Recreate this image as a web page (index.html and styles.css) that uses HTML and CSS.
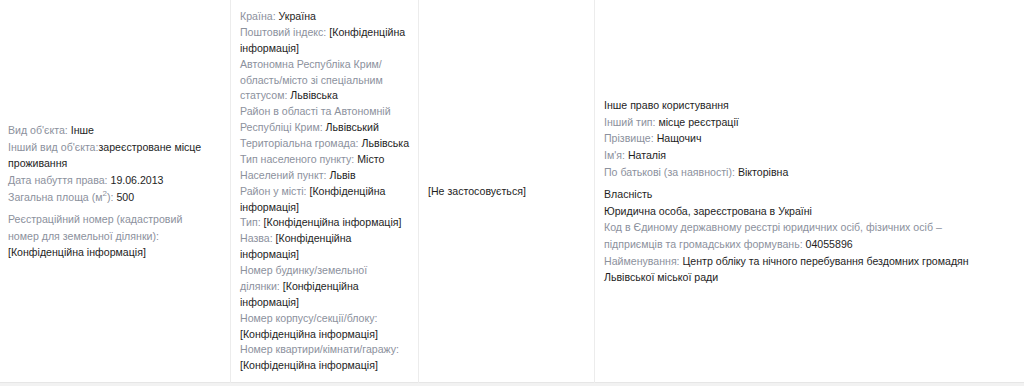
FILE: index.html
```html
<!DOCTYPE html>
<html lang="uk">
<head>
<meta charset="utf-8">
<title>Об'єкт</title>
<link rel="stylesheet" href="styles.css">
</head>
<body>
<div class="table">
  <div class="row">
    <div class="cell c1">
      <div class="block">
        <div><span class="lbl">Вид об'єкта:</span> <span class="val">Інше</span></div>
        <div><span class="lbl">Інший вид об'єкта:</span><span class="val">зареєстроване місце проживання</span></div>
        <div><span class="lbl">Дата набуття права:</span> <span class="val">19.06.2013</span></div>
        <div><span class="lbl">Загальна площа (м<sup>2</sup>):</span> <span class="val">500</span></div>
      </div>
      <div class="block">
        <div><span class="lbl">Реєстраційний номер (кадастровий номер для земельної ділянки):</span> <span class="val">[Конфіденційна інформація]</span></div>
      </div>
    </div>
    <div class="cell c2">
      <div><span class="lbl">Країна:</span> <span class="val">Україна</span></div>
      <div><span class="lbl">Поштовий індекс:</span> <span class="val">[Конфіденційна інформація]</span></div>
      <div><span class="lbl">Автономна Республіка Крим/ область/місто зі спеціальним статусом:</span> <span class="val">Львівська</span></div>
      <div><span class="lbl">Район в області та Автономній Республіці Крим:</span> <span class="val">Львівський</span></div>
      <div><span class="lbl">Територіальна громада:</span> <span class="val">Львівська</span></div>
      <div><span class="lbl">Тип населеного пункту:</span> <span class="val">Місто</span></div>
      <div><span class="lbl">Населений пункт:</span> <span class="val">Львів</span></div>
      <div><span class="lbl">Район у місті:</span> <span class="val">[Конфіденційна інформація]</span></div>
      <div><span class="lbl">Тип:</span> <span class="val">[Конфіденційна інформація]</span></div>
      <div><span class="lbl">Назва:</span> <span class="val">[Конфіденційна інформація]</span></div>
      <div><span class="lbl">Номер будинку/земельної<br>ділянки:</span> <span class="val">[Конфіденційна інформація]</span></div>
      <div><span class="lbl">Номер корпусу/секції/блоку:</span> <span class="val">[Конфіденційна інформація]</span></div>
      <div><span class="lbl">Номер квартири/кімнати/гаражу:</span> <span class="val">[Конфіденційна інформація]</span></div>
    </div>
    <div class="cell c3">
      <div class="val">[Не застосовується]</div>
    </div>
    <div class="cell c4">
      <div class="block">
        <div class="val">Інше право користування</div>
        <div><span class="lbl">Інший тип:</span> <span class="val">місце реєстрації</span></div>
        <div><span class="lbl">Прізвище:</span> <span class="val">Нащочич</span></div>
        <div><span class="lbl">Ім'я:</span> <span class="val">Наталія</span></div>
        <div><span class="lbl">По батькові (за наявності):</span> <span class="val">Вікторівна</span></div>
      </div>
      <div class="block">
        <div class="val">Власність</div>
        <div class="val">Юридична особа, зареєстрована в Україні</div>
        <div><span class="lbl">Код в Єдиному державному реєстрі юридичних осіб, фізичних осіб – підприємців та громадських формувань:</span> <span class="val">04055896</span></div>
        <div><span class="lbl">Найменування:</span> <span class="val">Центр обліку та нічного перебування бездомних громадян Львівської міської ради</span></div>
      </div>
    </div>
  </div>
  <div class="next-row"></div>
</div>
</body>
</html>
```

FILE: styles.css
```css
html, body {
  margin: 0;
  padding: 0;
  background: #ffffff;
}
body {
  font-family: "Liberation Sans", Arial, sans-serif;
  font-size: 10.6px;
  color: #1e1e1e;
  overflow: hidden;
}
.table {
  width: 1024px;
}
.row {
  display: grid;
  grid-template-columns: 230px 188px 176px 1fr;
  height: 383px;
  border-bottom: 1px solid #e6e6e6;
  box-sizing: border-box;
}
.cell {
  display: flex;
  flex-direction: column;
  justify-content: center;
  padding: 9px 10px 9px 9px;
  line-height: 16.7px;
  box-sizing: border-box;
  min-width: 0;
}
.c1 {
  padding-left: 8px;
  padding-right: 14px;
}
.c2,
.c3,
.c4 {
  border-left: 1px solid #ececec;
}
.c2 {
  line-height: 15.87px;
  padding-right: 7px;
}
.c4 {
  padding-right: 36px;
}
.block + .block {
  margin-top: 5.5px;
}
.lbl {
  color: #8c919d;
}
.val {
  color: #1e1e1e;
}
sup {
  font-size: 8px;
  line-height: 0;
  vertical-align: 5px;
}
.next-row {
  height: 3px;
  background: #f2f2f2;
}
```
